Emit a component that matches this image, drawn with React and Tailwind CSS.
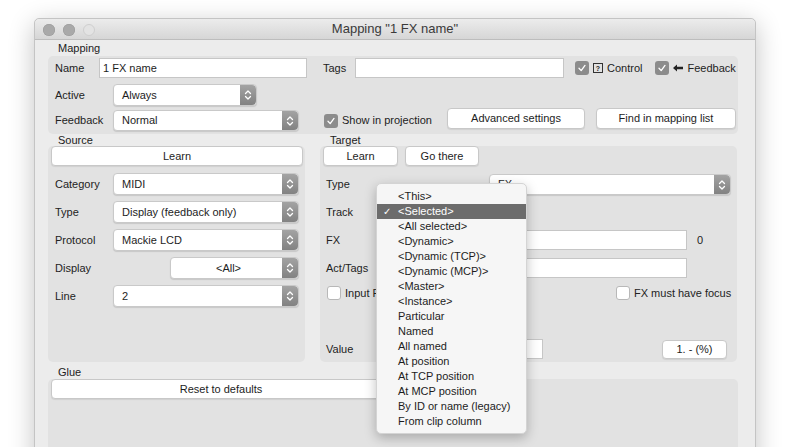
import React from 'react';

const font = { fontFamily: '"Liberation Sans", Arial, sans-serif' };

const Stepper = () => (
  <div className="flex h-full w-[16px] shrink-0 items-center justify-center rounded-r-[4px] bg-gradient-to-b from-[#a3a3a3] to-[#828282]">
    <svg width="8" height="12" viewBox="0 0 8 12" fill="none" stroke="#fff" strokeWidth="1.3" strokeLinecap="round" strokeLinejoin="round">
      <path d="M1.5 4.5 L4 2 L6.5 4.5" />
      <path d="M1.5 7.5 L4 10 L6.5 7.5" />
    </svg>
  </div>
);

const Select = ({ value, w, h = 'h-[22px]', center }) => (
  <div className={`flex ${w} ${h} shrink-0 items-stretch rounded-[4px] border border-[#c9c9c9] bg-white shadow-[0_1px_1px_rgba(0,0,0,0.12)]`}>
    <div className={`flex flex-1 items-center text-[11px] text-[#1d1d1d] ${center ? 'justify-center pl-[4px]' : 'pl-[8px]'}`}>{value}</div>
    <Stepper />
  </div>
);

const Input = ({ value, w }) => (
  <div className={`flex h-[20px] ${w} shrink-0 items-center border border-[#c6c6c6] bg-white pl-[3px] text-[11px] text-[#1d1d1d]`}>
    {value}
  </div>
);

const Button = ({ children, w, h = 'h-[20px]' }) => (
  <div className={`flex ${w} ${h} shrink-0 items-center justify-center rounded-[4px] border border-[#c8c8c8] bg-white text-[11px] text-[#1d1d1d] shadow-[0_1px_1px_rgba(0,0,0,0.08)]`}>
    {children}
  </div>
);

const Checkbox = ({ checked }) =>
  checked ? (
    <div className="flex h-[14px] w-[14px] shrink-0 items-center justify-center rounded-[3px] bg-[#8c8c8c]">
      <svg width="10" height="10" viewBox="0 0 10 10" fill="none" stroke="#fff" strokeWidth="1.3" strokeLinecap="round" strokeLinejoin="round">
        <path d="M2 5.3 L4.2 7.6 L8 2.4" />
      </svg>
    </div>
  ) : (
    <div className="h-[14px] w-[14px] shrink-0 rounded-[3px] border border-[#b8b8b8] bg-white" />
  );

const Label = ({ children, w }) => (
  <div className={`${w} shrink-0 text-[11px] text-[#222]`}>{children}</div>
);

const trackItems = [
  '<This>', '<Selected>', '<All selected>', '<Dynamic>', '<Dynamic (TCP)>', '<Dynamic (MCP)>',
  '<Master>', '<Instance>', 'Particular', 'Named', 'All named', 'At position',
  'At TCP position', 'At MCP position', 'By ID or name (legacy)', 'From clip column',
];

const App = () => {
  return (
    <div className="h-[447px] w-[799px] overflow-hidden bg-white pl-[34px] pt-[18px]" style={font}>
      <div className="relative h-[460px] w-[722px] rounded-t-[5px] border border-[#c4c4c4] bg-[#ececec] shadow-[0_6px_26px_rgba(0,0,0,0.24)]">
        {/* Title bar */}
        <div className="relative flex h-[21px] items-center justify-center rounded-t-[5px] border-b border-[#bdbdbd] bg-gradient-to-b from-[#ececec] to-[#d6d6d6]">
          <div className="absolute left-[8px] top-[5px] flex gap-[8px]">
            <div className="h-[12px] w-[12px] rounded-full bg-[#a9a9a9] shadow-[inset_0_0_0_0.5px_#999]" />
            <div className="h-[12px] w-[12px] rounded-full bg-[#a9a9a9] shadow-[inset_0_0_0_0.5px_#999]" />
            <div className="h-[12px] w-[12px] rounded-full border border-[#cfcfcf] bg-[#e3e3e3]" />
          </div>
          <span className="text-[13px] text-[#3a3a3a]">Mapping "1 FX name"</span>
        </div>

        <div className="pl-[13px]">
          {/* Mapping */}
          <div className="h-[16px] pl-[10px] text-[11px] leading-[16px] text-[#222]">Mapping</div>
          <div className="h-[78px] w-[690px] rounded-[5px] bg-[#e2e2e2] pl-[7px] pt-[2px]">
            <div className="flex h-[20px] items-center">
              <Label w="w-[44px]">Name</Label>
              <Input value="1 FX name" w="w-[208px]" />
              <div className="ml-[16px]"><Label w="w-[32px]">Tags</Label></div>
              <Input value="" w="w-[209px]" />
              <div className="ml-[11px] flex items-center gap-[4px]">
                <Checkbox checked />
                <div className="flex h-[10px] w-[10px] items-center justify-center border border-[#333] text-[7px] font-bold leading-none text-[#222]">?</div>
                <span className="text-[11px] text-[#222]">Control</span>
              </div>
              <div className="ml-[13px] flex items-center gap-[4px]">
                <Checkbox checked />
                <svg width="10" height="8" viewBox="0 0 10 8"><path d="M0 4 L4 0.5 L4 2.8 L10 2.8 L10 5.2 L4 5.2 L4 7.5 Z" fill="#222" /></svg>
                <span className="text-[11px] text-[#222]">Feedback</span>
              </div>
            </div>
            <div className="mt-[6px] flex h-[22px] items-center">
              <Label w="w-[58px]">Active</Label>
              <Select value="Always" w="w-[144px]" />
            </div>
            <div className="mt-[4px] flex h-[21px] items-center">
              <Label w="w-[58px]">Feedback</Label>
              <Select value="Normal" w="w-[186px]" h="h-[21px]" />
              <div className="ml-[25px] flex w-[123px] items-center gap-[4px]">
                <Checkbox checked />
                <span className="text-[11px] text-[#222]">Show in projection</span>
              </div>
              <div className="-mt-[4px] flex gap-[11px]">
                <Button w="w-[138px]" h="h-[21px]">Advanced settings</Button>
                <Button w="w-[140px]" h="h-[21px]">Find in mapping list</Button>
              </div>
            </div>
          </div>

          {/* Source / Target */}
          <div className="flex gap-[15px]">
            <div className="w-[257px]">
              <div className="h-[12px] pl-[10px] text-[11px] leading-[12px] text-[#222]">Source</div>
              <div className="h-[216px] rounded-[5px] bg-[#e2e2e2] px-[3px]">
                <Button w="w-[252px]">Learn</Button>
                <div className="pl-[4px]">
                  <div className="mt-[7px] flex h-[22px] items-center">
                    <Label w="w-[58px]">Category</Label>
                    <Select value="MIDI" w="w-[186px]" />
                  </div>
                  <div className="mt-[6px] flex h-[22px] items-center">
                    <Label w="w-[58px]">Type</Label>
                    <Select value="Display (feedback only)" w="w-[186px]" />
                  </div>
                  <div className="mt-[6px] flex h-[22px] items-center">
                    <Label w="w-[58px]">Protocol</Label>
                    <Select value="Mackie LCD" w="w-[186px]" />
                  </div>
                  <div className="mt-[6px] flex h-[22px] items-center">
                    <Label w="w-[115px]">Display</Label>
                    <Select value="<All>" w="w-[129px]" center />
                  </div>
                  <div className="mt-[6px] flex h-[22px] items-center">
                    <Label w="w-[58px]">Line</Label>
                    <Select value="2" w="w-[186px]" />
                  </div>
                </div>
              </div>
            </div>

            <div className="w-[417px]">
              <div className="h-[12px] pl-[10px] text-[11px] leading-[12px] text-[#222]">Target</div>
              <div className="h-[216px] rounded-[5px] bg-[#e2e2e2] px-[3px]">
                <div className="flex gap-[7px]">
                  <Button w="w-[75px]">Learn</Button>
                  <Button w="w-[74px]">Go there</Button>
                </div>
                <div className="pl-[3px]">
                  <div className="mt-[8px] flex h-[21px] items-center">
                    <Label w="w-[163px]">Type</Label>
                    <Select value="FX" w="w-[242px]" h="h-[21px]" />
                  </div>
                  <div className="mt-[6px] flex h-[22px] items-center">
                    <Label w="w-[57px]">Track</Label>
                    <Select value="" w="w-[137px]" />
                  </div>
                  <div className="mt-[7px] flex h-[20px] items-center">
                    <Label w="w-[163px]">FX</Label>
                    <Input value="" w="w-[198px]" />
                    <span className="ml-[10px] text-[11px] text-[#222]">0</span>
                  </div>
                  <div className="mt-[8px] flex h-[20px] items-center">
                    <Label w="w-[163px]">Act/Tags</Label>
                    <Input value="" w="w-[198px]" />
                  </div>
                  <div className="mt-[8px] flex h-[14px] items-center">
                    <div className="flex w-[290px] items-center gap-[4px] pl-[1px]">
                      <Checkbox />
                      <span className="text-[11px] text-[#222]">Input FX</span>
                    </div>
                    <div className="flex items-center gap-[4px]">
                      <Checkbox />
                      <span className="text-[11px] text-[#222]">FX must have focus</span>
                    </div>
                  </div>
                  <div className="mt-[39px] flex h-[20px] items-center">
                    <Label w="w-[57px]">Value</Label>
                    <Input value="" w="w-[160px]" />
                    <div className="ml-[119px]">
                      <Button w="w-[65px]" h="h-[19px]">1. - (%)</Button>
                    </div>
                  </div>
                </div>
              </div>
            </div>
          </div>

          {/* Glue */}
          <div className="h-[17px] pl-[10px] pt-[3px] text-[11px] leading-[14px] text-[#222]">Glue</div>
          <div className="h-[90px] w-[690px] rounded-[5px] bg-[#e2e2e2] px-[3px]">
            <Button w="w-[340px]">Reset to defaults</Button>
          </div>
        </div>

        {/* Track popup menu */}
        <div className="absolute left-[341px] top-[164px] w-[151px] rounded-[5px] border border-[#d4d4d4] bg-[#f6f6f6] pb-[4px] pt-[5px] shadow-[0_4px_12px_rgba(0,0,0,0.25)]">
          {trackItems.map((item) => (
            <div
              key={item}
              className={`flex h-[15px] items-center text-[11px] ${item === '<Selected>' ? 'bg-[#6c6c6c] text-white' : 'text-[#1d1d1d]'}`}
            >
              <span className="w-[21px] pl-[6px] text-[10px]">{item === '<Selected>' ? '✓' : ''}</span>
              <span>{item}</span>
            </div>
          ))}
        </div>
      </div>
    </div>
  );
};

export default App;
